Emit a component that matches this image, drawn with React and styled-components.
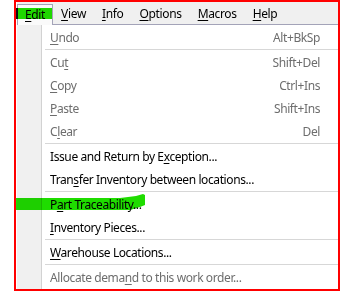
import React from 'react';
import styled, { createGlobalStyle } from 'styled-components';

const GlobalStyle = createGlobalStyle`
  html, body { margin: 0; padding: 0; background: #fff; }
  body { font-family: "Noto Sans", "Open Sans", sans-serif; font-size: 12px; }
`;

const Frame = styled.div`
  position: relative;
  box-sizing: border-box;
  margin-left: 14px;
  width: 326px;
  height: 291px;
  border: 2px solid #ff0000;
  padding-left: 1px;
  display: flex;
  flex-direction: column;
  overflow: hidden;
  background: #fff;
`;

const MenuBar = styled.div`
  display: flex;
  align-items: flex-end;
  height: 22px;
  background: #f0f0f0;
  flex: none;
`;

const BarItem = styled.div`
  position: relative;
  box-sizing: border-box;
  height: 20px;
  line-height: 19px;
  padding: 0 ${(p) => (p.$open ? '7px' : '8px')};
  color: #000;
  letter-spacing: -0.35px;
  white-space: nowrap;
  ${(p) =>
    p.$open &&
    `
    border: 1px solid #a3a3b8;
    border-bottom: none;
    background: #fafafa;
    height: 21px;
    margin-bottom: -1px;
    z-index: 2;
  `}
`;

const EditMark = styled.span`
  position: absolute;
  left: -2px;
  top: 3px;
  width: 34px;
  height: 11px;
  background: #1fdc00;
  mix-blend-mode: multiply;
  border-left: 2px solid #111;
`;

const Dropdown = styled.div`
  flex: 1;
  display: flex;
  border-top: 1px solid #a3a3b8;
  position: relative;
  z-index: 1;
`;

const Gutter = styled.div`
  width: 24px;
  flex: none;
  background: #f0f0f0;
  border-right: 1px solid #d2d2d2;
`;

const List = styled.div`
  flex: 1;
  display: flex;
  flex-direction: column;
  padding-top: 1px;
  background: #fff;
`;

const Item = styled.div`
  height: 23px;
  flex: none;
  display: flex;
  align-items: center;
  justify-content: space-between;
  padding: 0 18px 0 8px;
  color: ${(p) => (p.$disabled ? '#6d6d6d' : '#000')};
  letter-spacing: -0.4px;
  white-space: nowrap;
`;

const Shortcut = styled.span`
  color: ${(p) => (p.$disabled ? '#6d6d6d' : '#000')};
`;

const Separator = styled.div`
  box-sizing: border-box;
  height: 2px;
  flex: none;
  margin-left: 3px;
  border-top: 1px solid #d7d7d7;
`;

const Key = styled.span`
  text-decoration: underline;
  text-decoration-thickness: 1px;
  text-underline-offset: 2px;
`;

const Marker = styled.svg`
  position: absolute;
  left: 0;
  top: 188px;
  width: 140px;
  height: 24px;
  mix-blend-mode: multiply;
  pointer-events: none;
  z-index: 5;
`;

const Label = ({ text, k }) => (
  <span>
    {text.slice(0, k)}
    <Key>{text[k]}</Key>
    {text.slice(k + 1)}
  </span>
);

const bar = [
  ['Edit', 0, true],
  ['View', 0],
  ['Info', 0],
  ['Options', 0],
  ['Macros', 0],
  ['Help', 0],
];

const allocate = 'Allocate demand to this work order...';
const issue = 'Issue and Return by Exception...';

const menu = [
  { t: 'Undo', k: 0, s: 'Alt+BkSp', d: true },
  'sep',
  { t: 'Cut', k: 2, s: 'Shift+Del', d: true },
  { t: 'Copy', k: 0, s: 'Ctrl+Ins', d: true },
  { t: 'Paste', k: 0, s: 'Shift+Ins', d: true },
  { t: 'Clear', k: 1, s: 'Del', d: true },
  'sep',
  { t: issue, k: issue.indexOf('Ex') + 1 },
  { t: 'Transfer Inventory between locations...', k: 4 },
  'sep',
  { t: 'Part Traceability...', k: 1 },
  { t: 'Inventory Pieces...', k: 0 },
  'sep',
  { t: 'Warehouse Locations...', k: 0 },
  'sep',
  { t: allocate, k: allocate.indexOf('demand') + 4, d: true },
];

export default function App() {
  return (
    <>
      <GlobalStyle />
      <Frame>
        <MenuBar>
          {bar.map(([t, k, open]) => (
            <BarItem key={t} $open={open}>
              {open && <EditMark />}
              <Label text={t} k={k} />
            </BarItem>
          ))}
        </MenuBar>
        <Dropdown>
          <Gutter />
          <List>
            {menu.map((m, i) =>
              m === 'sep' ? (
                <Separator key={i} />
              ) : (
                <Item key={i} $disabled={m.d}>
                  <Label text={m.t} k={m.k} />
                  {m.s && <Shortcut $disabled={m.d}>{m.s}</Shortcut>}
                </Item>
              )
            )}
          </List>
        </Dropdown>
        <Marker viewBox="0 0 140 24">
          <polygon
            points="0,8 104,8 120,6 127,4 129,5 129,15 124,17 114,20 0,20"
            fill="#1fdc00"
          />
        </Marker>
      </Frame>
    </>
  );
}
